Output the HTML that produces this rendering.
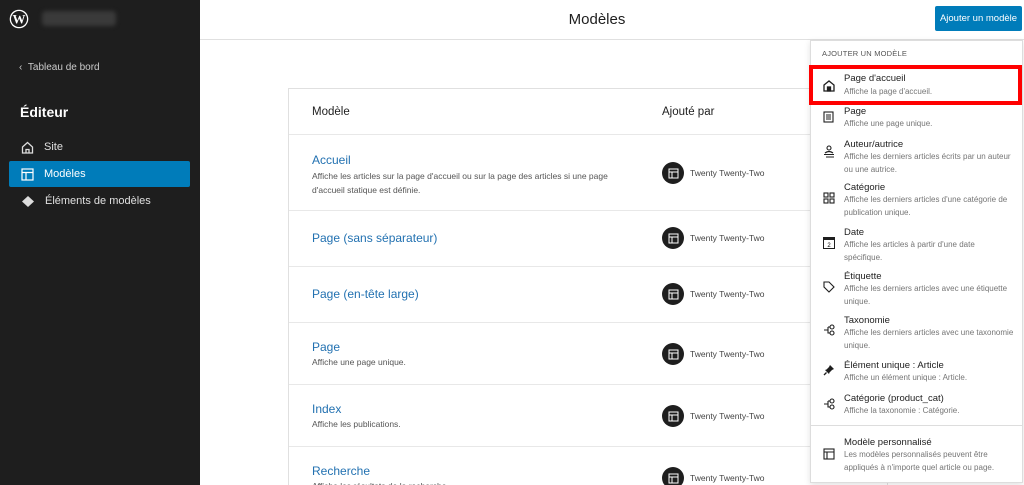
<!DOCTYPE html>
<html><head><meta charset="utf-8"><style>
*{box-sizing:border-box;margin:0;padding:0}
html{width:1024px;height:485px;overflow:hidden}
body{width:1024px;height:485px;overflow:hidden;font-family:"Liberation Sans",sans-serif;background:#fff;position:relative;color:#1e1e1e}
.side{position:absolute;left:0;top:0;width:200px;height:485px;background:#1e1e1e;color:#fff}
.blur{position:absolute;left:42px;top:11px;width:74px;height:15px;background:#3a3a3a;border-radius:4px;filter:blur(2px)}
.nav{position:absolute;left:9px;width:181px;height:26px;font-size:11px;display:flex;align-items:center;padding-left:12px;color:#e0e0e0}
.nav svg{margin-right:10px}
.hdr{position:absolute;left:200px;top:0;right:0;height:40px;border-bottom:1px solid #e0e0e0}
.title{position:absolute;left:200px;right:0;top:11px;text-align:center;font-size:15px;padding-right:30px}
.btn{position:absolute;left:935px;top:6px;width:87px;height:25px;background:#007cba;color:#fff;font-size:9.5px;line-height:25px;text-align:center;border-radius:2px;white-space:nowrap}
.card{position:absolute;left:288px;top:88px;width:600px;height:420px;border:1px solid #e0e0e0}
.row{position:absolute;left:0;right:0;border-bottom:1px solid #e8e8e8}
.row .n{position:absolute;left:23px;color:#2271b1;font-size:12px}
.row .d{position:absolute;left:23px;font-size:8.5px;color:#555;line-height:14px;width:320px}
.by{position:absolute;left:373px;display:flex;align-items:center;font-size:8.5px;color:#444}
.by i{width:22px;height:22px;border-radius:50%;background:#1e1e1e;margin-right:6px;display:flex;align-items:center;justify-content:center}
.menu{position:absolute;left:810px;top:40px;width:213px;height:443px;background:#fff;border:1px solid #ddd;box-shadow:0 2px 6px rgba(0,0,0,.12)}
.it{position:absolute;left:0;width:211px}
.it .t{position:absolute;left:33px;font-size:9.5px;color:#1e1e1e;white-space:nowrap}
.it .s{position:absolute;left:33px;font-size:8px;color:#757575;line-height:12.5px;width:170px}
.it svg{position:absolute;left:12px}
</style></head><body>
<div class="side">
<svg style="position:absolute;left:9px;top:9px" width="20" height="20" viewBox="0 0 20 20"><circle cx="10" cy="10" r="9.3" fill="#fff"/><circle cx="10" cy="10" r="8" fill="#1e1e1e"/><text x="10" y="14.5" font-size="13" font-family="Liberation Serif" font-weight="bold" fill="#fff" text-anchor="middle">W</text></svg>
<div class="blur"></div>
<div style="position:absolute;left:19px;top:62px;font-size:10px;color:#ccc">‹&nbsp;&nbsp;Tableau de bord</div>
<div style="position:absolute;left:20px;top:104px;font-size:14px;font-weight:bold">Éditeur</div>
<div class="nav" style="top:134px"><svg width="13" height="13" viewBox="0 0 13 13" fill="none" stroke="#ddd" stroke-width="1.3"><path d="M1.5 6L6.5 1.5 11.5 6V12H1.5z"/><path d="M5 12V8.5H8V12"/></svg>Site</div>
<div class="nav" style="top:161px;background:#007cba;color:#fff;border-radius:2px"><svg width="13" height="13" viewBox="0 0 13 13" fill="none" stroke="#fff" stroke-width="1.2"><rect x="1" y="1" width="11" height="11"/><path d="M1 4.5H12M5 4.5V12"/></svg>Modèles</div>
<div class="nav" style="top:188px"><svg width="14" height="13" viewBox="0 0 14 13" fill="#ddd"><path d="M7 1L13 6.5 7 12 1 6.5z"/></svg>Éléments de modèles</div>
</div>
<div class="hdr"></div>
<div class="title">Modèles</div>
<div class="btn">Ajouter un modèle</div>
<div class="card">
<div class="row" style="top:0;height:46px"><div style="position:absolute;left:23px;top:17px;font-size:11.5px">Modèle</div><div style="position:absolute;left:373px;top:17px;font-size:11.5px">Ajouté par</div></div>
<div class="row" style="top:46px;height:76px"><div class="n" style="top:18px">Accueil</div><div class="d" style="top:34px">Affiche les articles sur la page d'accueil ou sur la page des articles si une page d'accueil statique est définie.</div><div class="by" style="top:27px"><i><svg width="11" height="11" viewBox="0 0 11 11" fill="none" stroke="#fff" stroke-width="1"><rect x="1" y="1" width="9" height="9"/><path d="M1 4H10M4 4V10"/></svg></i>Twenty Twenty-Two</div></div>
<div class="row" style="top:122px;height:56px"><div class="n" style="top:20px">Page (sans séparateur)</div><div class="by" style="top:16px"><i><svg width="11" height="11" viewBox="0 0 11 11" fill="none" stroke="#fff" stroke-width="1"><rect x="1" y="1" width="9" height="9"/><path d="M1 4H10M4 4V10"/></svg></i>Twenty Twenty-Two</div></div>
<div class="row" style="top:178px;height:56px"><div class="n" style="top:20px">Page (en-tête large)</div><div class="by" style="top:16px"><i><svg width="11" height="11" viewBox="0 0 11 11" fill="none" stroke="#fff" stroke-width="1"><rect x="1" y="1" width="9" height="9"/><path d="M1 4H10M4 4V10"/></svg></i>Twenty Twenty-Two</div></div>
<div class="row" style="top:234px;height:62px"><div class="n" style="top:17px">Page</div><div class="d" style="top:32px">Affiche une page unique.</div><div class="by" style="top:20px"><i><svg width="11" height="11" viewBox="0 0 11 11" fill="none" stroke="#fff" stroke-width="1"><rect x="1" y="1" width="9" height="9"/><path d="M1 4H10M4 4V10"/></svg></i>Twenty Twenty-Two</div></div>
<div class="row" style="top:296px;height:62px"><div class="n" style="top:17px">Index</div><div class="d" style="top:32px">Affiche les publications.</div><div class="by" style="top:20px"><i><svg width="11" height="11" viewBox="0 0 11 11" fill="none" stroke="#fff" stroke-width="1"><rect x="1" y="1" width="9" height="9"/><path d="M1 4H10M4 4V10"/></svg></i>Twenty Twenty-Two</div></div>
<div class="row" style="top:358px;height:62px;border:0"><div class="n" style="top:17px">Recherche</div><div class="d" style="top:32px">Affiche les résultats de la recherche.</div><div class="by" style="top:20px"><i><svg width="11" height="11" viewBox="0 0 11 11" fill="none" stroke="#fff" stroke-width="1"><rect x="1" y="1" width="9" height="9"/><path d="M1 4H10M4 4V10"/></svg></i>Twenty Twenty-Two</div></div>
</div>
<div class="menu">
<div style="position:absolute;left:11px;top:8px;font-size:7.5px;color:#555;letter-spacing:.2px">AJOUTER UN MODÈLE</div>
<div class="it" style="top:24px;height:40px;border:4px solid #f00;left:-2px;width:213px"><div class="t" style="top:4px;left:31px">Page d'accueil</div><div class="s" style="top:17px;left:31px">Affiche la page d'accueil.</div><svg style="left:10px;top:11px" width="12" height="12" viewBox="0 0 12 12" fill="none" stroke="#1e1e1e" stroke-width="1.3"><path d="M1 5L6 1 11 5V11H1z"/><rect x="4.5" y="7" width="3" height="4" fill="#1e1e1e"/></svg></div>
<div class="it" style="top:65px"><div class="t" style="top:0">Page</div><div class="s" style="top:12px">Affiche une page unique.</div><svg style="top:5px" width="11" height="12" viewBox="0 0 11 12" fill="none" stroke="#1e1e1e" stroke-width="1.1"><rect x="1" y="1" width="9" height="10"/><path d="M3 4H8M3 6H8M3 8H8"/></svg></div>
<div class="it" style="top:98px"><div class="t" style="top:0">Auteur/autrice</div><div class="s" style="top:12px">Affiche les derniers articles écrits par un auteur ou une autrice.</div><svg style="top:6px" width="12" height="13" viewBox="0 0 12 13" fill="none" stroke="#1e1e1e" stroke-width="1.1"><circle cx="6" cy="3" r="2"/><path d="M2 8Q6 5 10 8M1 9.5H11M3 12H11"/></svg></div>
<div class="it" style="top:141px"><div class="t" style="top:0">Catégorie</div><div class="s" style="top:12px">Affiche les derniers articles d'une catégorie de publication unique.</div><svg style="top:10px" width="12" height="12" viewBox="0 0 12 12" fill="none" stroke="#1e1e1e" stroke-width="1.1"><rect x="1" y="1" width="4" height="4"/><rect x="7" y="1" width="4" height="4"/><rect x="1" y="7" width="4" height="4"/><rect x="7" y="7" width="4" height="4"/></svg></div>
<div class="it" style="top:186px"><div class="t" style="top:0">Date</div><div class="s" style="top:12px">Affiche les articles à partir d'une date<br>spécifique.</div><svg style="top:10px" width="12" height="12" viewBox="0 0 12 12"><rect x="0.5" y="0.5" width="11" height="11" fill="none" stroke="#1e1e1e"/><rect x="0.5" y="0.5" width="11" height="2.5" fill="#1e1e1e"/><text x="6" y="10" font-size="6" text-anchor="middle" font-family="Liberation Sans">2</text></svg></div>
<div class="it" style="top:230px"><div class="t" style="top:0">Étiquette</div><div class="s" style="top:12px">Affiche les derniers articles avec une étiquette unique.</div><svg style="top:10px" width="12" height="12" viewBox="0 0 12 12" fill="none" stroke="#1e1e1e" stroke-width="1.1"><path d="M1 1H6L11 6 6 11 1 6z"/></svg></div>
<div class="it" style="top:274px"><div class="t" style="top:0">Taxonomie</div><div class="s" style="top:12px">Affiche les derniers articles avec une taxonomie unique.</div><svg style="top:9px" width="13" height="12" viewBox="0 0 13 12" fill="none" stroke="#1e1e1e" stroke-width="1.1"><circle cx="9" cy="3" r="2"/><circle cx="9" cy="9" r="2"/><path d="M1 6H5M5 3H7M5 3V9H7"/></svg></div>
<div class="it" style="top:319px"><div class="t" style="top:0">Élément unique : Article</div><div class="s" style="top:12px">Affiche un élément unique : Article.</div><svg style="top:4px" width="12" height="12" viewBox="0 0 12 12" fill="#1e1e1e"><path d="M7 1L11 5 9 6 6.5 8.5 6 10 2 6 3.5 5.5 6 3z"/><path d="M3.5 8.5L1 11" stroke="#1e1e1e" stroke-width="1.3"/></svg></div>
<div class="it" style="top:352px"><div class="t" style="top:0">Catégorie (product_cat)</div><div class="s" style="top:12px">Affiche la taxonomie : Catégorie.</div><svg style="top:5px" width="13" height="12" viewBox="0 0 13 12" fill="none" stroke="#1e1e1e" stroke-width="1.1"><circle cx="9" cy="3" r="2"/><circle cx="9" cy="9" r="2"/><path d="M1 6H5M5 3H7M5 3V9H7"/></svg></div>
<div style="position:absolute;left:0;right:0;top:384px;border-top:1px solid #ddd"></div>
<div class="it" style="top:396px"><div class="t" style="top:0">Modèle personnalisé</div><div class="s" style="top:12px">Les modèles personnalisés peuvent être appliqués à n'importe quel article ou page.</div><svg style="top:11px" width="12" height="12" viewBox="0 0 12 12" fill="none" stroke="#1e1e1e" stroke-width="1.1"><rect x="1" y="1" width="10" height="10"/><path d="M1 4H11M4 4V11"/></svg></div>
</div>
</body></html>
